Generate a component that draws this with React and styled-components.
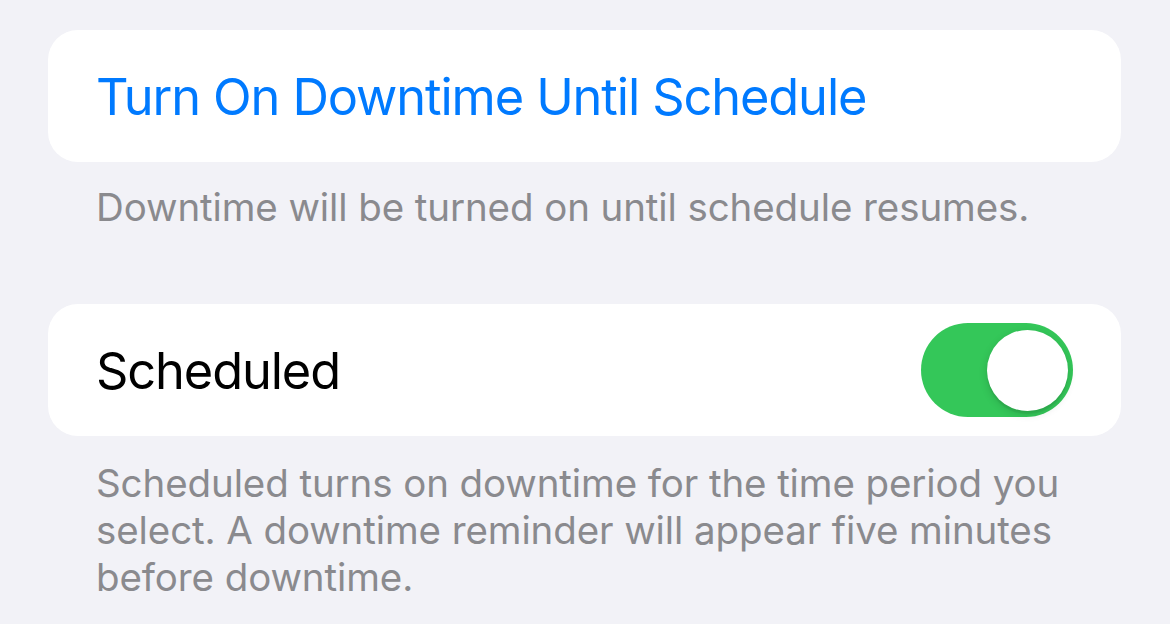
import React from "react"
import styled, {createGlobalStyle} from "styled-components"

/* page */
const Global = createGlobalStyle`
  body {
    margin: 0;
    background: #f2f2f7;
    font-family: Inter, "Noto Sans", sans-serif;
    -webkit-font-smoothing: antialiased;
  }
`

const Page = styled.div`
  padding: 30px 49px 0 48px;
  display: flex;
  flex-direction: column;
`

const Card = styled.div`
  background: #fff;
  border-radius: 30px;
  height: 132px;
  padding: 0 48px 0 48px;
  display: flex;
  align-items: center;
  justify-content: space-between;
  box-sizing: border-box;
`

const Label = styled.span`
  font-size: 50.5px;
  color: ${p => p.$blue ? "#007aff" : "#000"};
  letter-spacing: -1.1px;
`

const Footer = styled.p`
  margin: 0;
  padding: ${p => p.$top || 22}px 30px 0 48px;
  font-size: 38.5px;
  line-height: 47px;
  color: #8a8a8e;
  letter-spacing: -0.1px;
  margin-bottom: ${p => p.$gap || 0}px;
`

/* ------------------------------ */

const Switch = styled.div`
  width: 152px;
  height: 94px;
  border-radius: 47px;
  background: #34c759;
  display: flex;
  align-items: center;
  justify-content: flex-end;
  padding-right: 5px;
  box-sizing: border-box;
`

const Knob = styled.div`
  width: 81px;
  height: 81px;
  border-radius: 50%;
  background: #fff;
  box-shadow: 0 3px 8px rgba(0, 0, 0, 0.15), 0 3px 1px rgba(0, 0, 0, 0.06);
`

const App = () => {
  return (
    <Page>
      <Global />
      <Card>
        <Label $blue>Turn On Downtime Until Schedule</Label>
      </Card>
      <Footer $gap={73}>Downtime will be turned on until schedule resumes.</Footer>
      <Card>
        <Label>Scheduled</Label>
        <Switch>
          <Knob />
        </Switch>
      </Card>
      <Footer $top={24}>
        Scheduled turns on downtime for the time period you select. A downtime reminder will appear five minutes before downtime.
      </Footer>
    </Page>
  )
}

export default App
